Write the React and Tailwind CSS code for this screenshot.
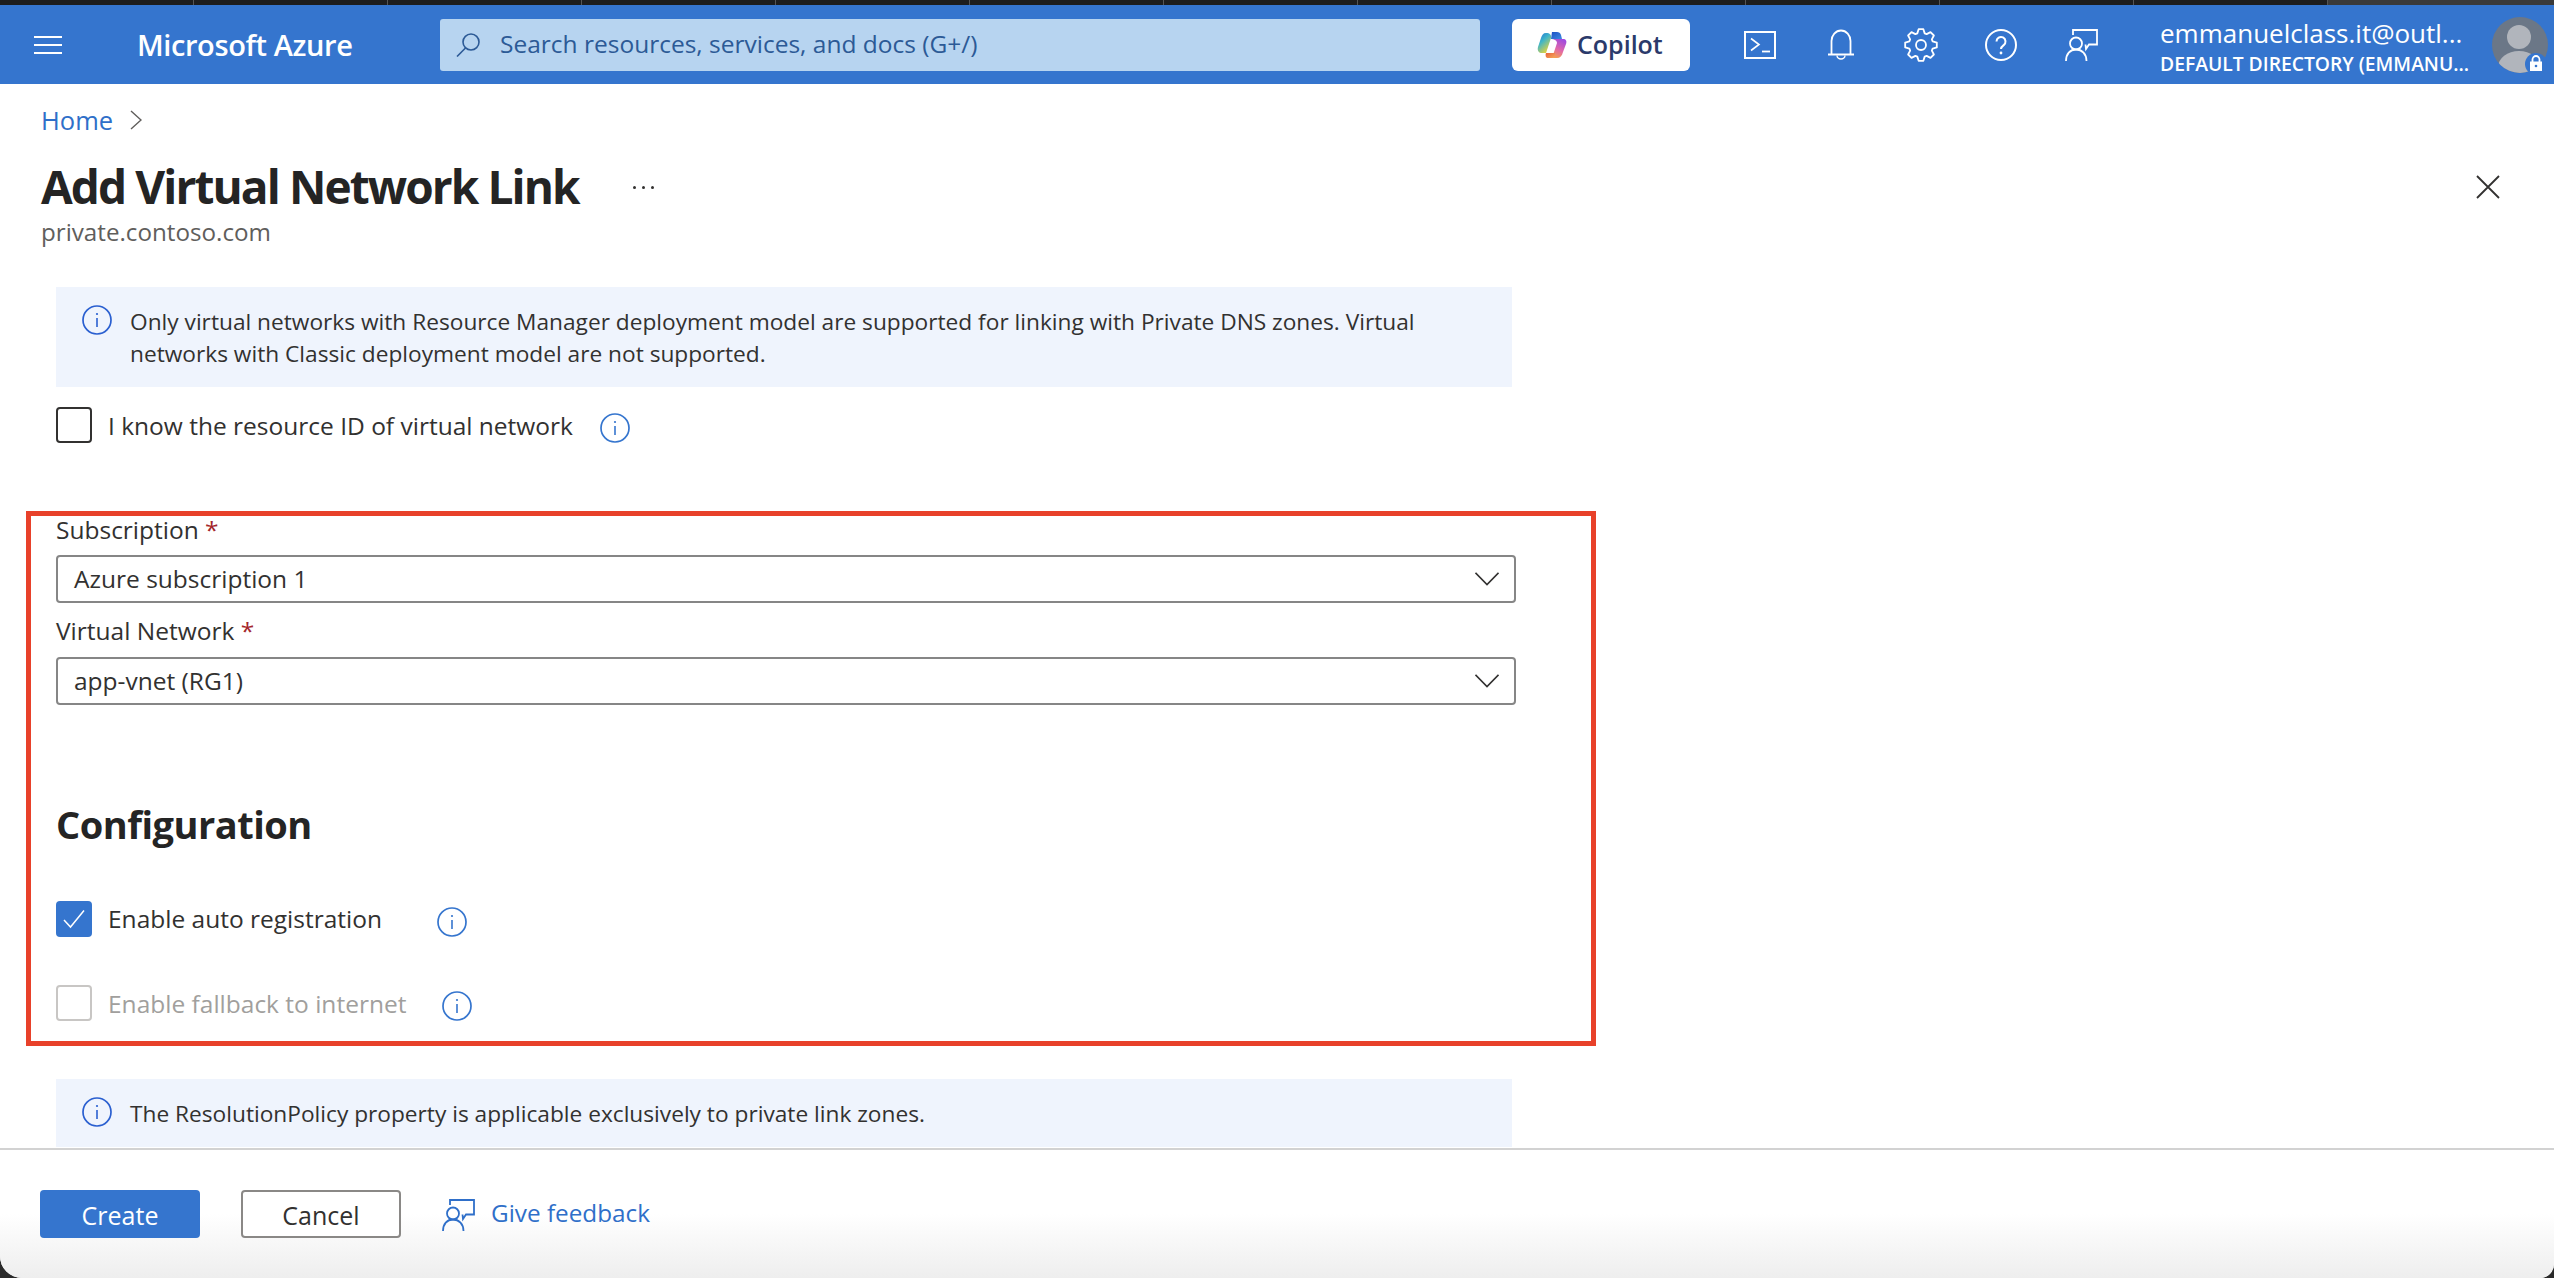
import React from "react";

function gearPoints() {
  // 8 tooth gear outline
  const pts = [];
  const n = 8;
  for (let i = 0; i < n; i++) {
    const a = (i * Math.PI * 2) / n - Math.PI / 2;
    const w = Math.PI / n;
    const add = (r, t) => pts.push(`${(17 + r * Math.cos(a + t)).toFixed(2)},${(17 + r * Math.sin(a + t)).toFixed(2)}`);
    add(12.2, -w * 0.78);
    add(16, -w * 0.38);
    add(16, w * 0.38);
    add(12.2, w * 0.78);
  }
  return pts.join(" ");
}

function TerminalIcon() {
  return (
    <svg width="32" height="28" viewBox="0 0 32 28" fill="none" stroke="#fff">
      <rect x="1" y="1" width="30" height="26" strokeWidth="2" />
      <path d="M7 7.5L15 13.5L7 19.5" strokeWidth="1.6" />
      <path d="M18 20.5H26" strokeWidth="1.8" />
    </svg>
  );
}

function BellIcon() {
  return (
    <svg width="26" height="31" viewBox="0 0 26 31" fill="none" stroke="#fff" strokeWidth="1.8">
      <path d="M3.5 25V12a9.5 10.5 0 0 1 19 0V25" />
      <path d="M0 25.5H26" strokeWidth="2" />
      <path d="M9 26.5a4 3.5 0 0 0 8 0" strokeWidth="1.4" />
    </svg>
  );
}

function GearIcon() {
  return (
    <svg width="34" height="34" viewBox="0 0 34 34" fill="none" stroke="#fff" strokeWidth="1.8" strokeLinejoin="round">
      <polygon points={gearPoints()} />
      <circle cx="17" cy="17" r="5" />
    </svg>
  );
}

function HelpIcon() {
  return (
    <svg width="32" height="32" viewBox="0 0 32 32" fill="none" stroke="#fff">
      <circle cx="16" cy="16" r="15" strokeWidth="2" />
      <path d="M11.5 12.5a4.5 4.5 0 1 1 7.2 3.6c-1.6 1.2-2.7 2-2.7 4" strokeWidth="2" />
      <circle cx="16" cy="24" r="1.4" fill="#fff" stroke="none" />
    </svg>
  );
}

function FeedbackIcon({ color }) {
  return (
    <svg width="33" height="32" viewBox="0 0 33 32" fill="none" stroke={color} strokeWidth="1.8">
      <path d="M8 6V1H32V15.5H24L21 20L20.5 15.5" />
      <circle cx="11" cy="14.5" r="6" />
      <path d="M1 32C1 25 5 20.5 11 20.5S21.500 25 21.500 32" />
    </svg>
  );
}

function InfoIcon({ color, className = "" }) {
  return (
    <svg width="30" height="30" viewBox="0 0 30 30" fill="none" stroke={color} className={`shrink-0 ${className}`}>
      <circle cx="15" cy="15" r="14" strokeWidth="1.7" />
      <path d="M15 13V22" strokeWidth="1.6" />
      <circle cx="15" cy="9" r="1.1" fill={color} stroke="none" />
    </svg>
  );
}

function CopilotLogo() {
  return (
    <svg width="30" height="28" viewBox="0 0 30 28" fill="none">
      <defs>
        <linearGradient id="copA" x1="0" y1="0" x2="0.6" y2="1">
          <stop offset="0" stopColor="#1f6fd6" />
          <stop offset="0.45" stopColor="#3fb5c8" />
          <stop offset="1" stopColor="#e4d33c" />
        </linearGradient>
        <linearGradient id="copB" x1="0.7" y1="0" x2="0.3" y2="1">
          <stop offset="0" stopColor="#a04be0" />
          <stop offset="0.55" stopColor="#e268a8" />
          <stop offset="1" stopColor="#f5a04a" />
        </linearGradient>
        <linearGradient id="copC" x1="0" y1="0" x2="1" y2="1">
          <stop offset="0" stopColor="#1c4fc4" />
          <stop offset="1" stopColor="#3d8be0" />
        </linearGradient>
        <linearGradient id="copD" x1="0" y1="0" x2="1" y2="1">
          <stop offset="0" stopColor="#e8603a" />
          <stop offset="1" stopColor="#f4a85a" />
        </linearGradient>
      </defs>
      <path d="M15 1H20C22 1 23.500 2 24 4L25 8H14Z" fill="url(#copC)" />
      <path d="M9 2C6 2 5 4 4 7L1 16C0 20 2 22 5 22H9L14 7C14.500 4 13 2 9 2Z" fill="url(#copA)" />
      <path d="M13 8H26C29 8 30 10 29 13L26 21C25 25 23 27 20 27H15L20 12C20 10 18 8 13 8Z" fill="url(#copB)" />
      <path d="M9 22H18L17 27H11C9 27 8 25 9 22Z" fill="url(#copD)" />
    </svg>
  );
}

function Avatar() {
  return (
    <div className="relative h-[56px] w-[56px] shrink-0">
      <svg width="56" height="56" viewBox="0 0 56 56">
        <defs>
          <clipPath id="avatarClip">
            <circle cx="28" cy="28" r="28" />
          </clipPath>
        </defs>
        <g clipPath="url(#avatarClip)">
          <rect width="56" height="56" fill="#6b7787" />
          <circle cx="27" cy="20" r="12" fill="#b1b5bc" />
          <ellipse cx="27" cy="50" rx="21" ry="16" fill="#b1b5bc" />
        </g>
      </svg>
      <div className="absolute left-[33px] top-[36px] flex h-[22px] w-[22px] items-center justify-center rounded-full bg-[#3575ce]">
        <svg width="14" height="17" viewBox="0 0 14 17">
          <path d="M3.500 7V4.500a3.500 3.500 0 0 1 7 0V7" fill="none" stroke="#fff" strokeWidth="1.800" />
          <path d="M1 6.500H13V16H1Z" fill="#fff" />
          <circle cx="7" cy="11" r="1.300" fill="#3575ce" />
        </svg>
      </div>
    </div>
  );
}

function Chevron() {
  return (
    <svg width="24" height="14" viewBox="0 0 24 14" fill="none" stroke="#323130" strokeWidth="1.600">
      <path d="M0.500 0.800L12 12.500L23.500 0.800" />
    </svg>
  );
}

function Select({ value }) {
  return (
    <div className="flex h-[48px] w-[1460px] items-center justify-between rounded-[4px] border-2 border-[#868686] pl-[16px] pr-[15px] text-[#323130]">
      <span>{value}</span>
      <Chevron />
    </div>
  );
}

function Banner({ className, children }) {
  return (
    <div className={`flex w-[1456px] items-start gap-[18px] bg-[#eff4fd] pl-[26px] text-[22.7px] text-[#323130] ${className}`}>
      <InfoIcon color="#2a5fd0" />
      <div className="mt-[1px] leading-[32px]">{children}</div>
    </div>
  );
}

function RequiredLabel({ children, className }) {
  return (
    <div className={`h-[28px] leading-[28px] text-[#323130] ${className}`}>
      {children} <span className="text-[#a4262c]">*</span>
    </div>
  );
}

export default function App() {
  return (
    <div className="h-[1278px] w-[2554px] overflow-hidden bg-[#2a2a2a] font-['Open_Sans',sans-serif] text-[24.5px]">
      <div className="flex h-full flex-col overflow-hidden rounded-bl-[22px] rounded-br-[14px] bg-white">
        {/* mac window strip */}
        <div className="grid h-[5px] shrink-0 grid-cols-[repeat(12,194px)_1fr] bg-[#1d1d1d]">
          {Array.from({ length: 12 }).map((_, i) => (
            <div key={i} className="border-r border-[#555]" />
          ))}
          <div className="bg-[#3a3a3a]" />
        </div>

        {/* Top bar */}
        <header className="flex h-[79px] shrink-0 items-center bg-[#3575ce] pl-[34px] text-white">
          <div className="flex h-[18px] w-[28px] flex-col justify-between">
            <div className="h-[2px] bg-white" />
            <div className="h-[2px] bg-white" />
            <div className="h-[2px] bg-white" />
          </div>
          <div className="ml-[75px] w-[303px] text-[29px] font-semibold tracking-[-0.4px]">Microsoft Azure</div>
          <div className="flex h-[52px] w-[1040px] items-center gap-[20px] rounded-[3px] bg-[#b7d4f0] pl-[16px] text-[24.5px] text-[#2c5a96]">
            <svg width="24" height="24" viewBox="0 0 24 24" fill="none" stroke="#2c5a96" strokeWidth="1.600">
              <circle cx="15" cy="9" r="8" />
              <path d="M9.500 15L1 23.500" />
            </svg>
            <span>Search resources, services, and docs (G+/)</span>
          </div>
          <div className="ml-[32px] flex h-[52px] w-[178px] items-center gap-[10px] rounded-[6px] bg-white pl-[25px] text-[25px] font-semibold text-[#2b3a6b]">
            <CopilotLogo />
            <span>Copilot</span>
          </div>
          <div className="ml-[54px]"><TerminalIcon /></div>
          <div className="ml-[52px]"><BellIcon /></div>
          <div className="ml-[50px]"><GearIcon /></div>
          <div className="ml-[47px]"><HelpIcon /></div>
          <div className="ml-[48px]"><FeedbackIcon color="#fff" /></div>
          <div className="ml-[62px] mt-[7px] w-[332px] whitespace-nowrap">
            <div className="text-[26px] leading-[32px]">emmanuelclass.it@outl...</div>
            <div className="text-[19.300px] font-semibold leading-[30px]">DEFAULT DIRECTORY (EMMANU...</div>
          </div>
          <Avatar />
        </header>

        {/* Blade */}
        <main className="min-h-0 flex-1 overflow-hidden">
          <div className="px-[41px] pt-[20px]">
            <div className="flex h-[32px] items-center gap-[17px] text-[25.500px] text-[#2f6fc9]">
              <span>Home</span>
              <svg width="12" height="20" viewBox="0 0 12 20" fill="none" stroke="#605e5c" strokeWidth="1.400">
                <path d="M1 1L11 10L1 19" />
              </svg>
            </div>
            <div className="mt-[22px] flex h-[56px] items-center text-[#242424]">
              <h1 className="w-[592px] whitespace-nowrap text-[46px] font-bold tracking-[-1.9px]">Add Virtual Network Link</h1>
              <span className="mt-[2px] flex gap-[6px]">
                <i className="h-[3px] w-[3px] rounded-full bg-[#323130]" />
                <i className="h-[3px] w-[3px] rounded-full bg-[#323130]" />
                <i className="h-[3px] w-[3px] rounded-full bg-[#323130]" />
              </span>
              <svg className="ml-auto mr-[13px] mt-[2px]" width="24" height="24" viewBox="0 0 24 24" stroke="#323130" strokeWidth="1.800">
                <path d="M1 1L23 23M23 1L1 23" />
              </svg>
            </div>
            <div className="mt-[3px] h-[30px] text-[24.200px] leading-[30px] text-[#605e5c]">private.contoso.com</div>
          </div>

          <div className="ml-[56px] mt-[40px]">
            <Banner className="h-[100px] pt-[18px]">
              <span className="whitespace-nowrap">Only virtual networks with Resource Manager deployment model are supported for linking with Private DNS zones. Virtual</span>
              <br />
              networks with Classic deployment model are not supported.
            </Banner>
            <div className="mt-[20px] flex h-[36px] items-center text-[#323130]">
              <div className="h-[36px] w-[36px] rounded-[4px] border-2 border-[#323130]" />
              <span className="ml-[16px] w-[492px] whitespace-nowrap pt-[2px]">I know the resource ID of virtual network</span>
              <InfoIcon color="#3575ce" className="self-end" />
            </div>
          </div>

          <section className="ml-[26px] mt-[68px] h-[535px] w-[1570px] border-[5px] border-[#e8412a] pl-[25px]">
            <RequiredLabel>Subscription</RequiredLabel>
            <div className="mt-[11px]"><Select value="Azure subscription 1" /></div>
            <RequiredLabel className="mt-[14px]">Virtual Network</RequiredLabel>
            <div className="mt-[12px]"><Select value="app-vnet (RG1)" /></div>
            <h2 className="mt-[94px] h-[50px] text-[38px] font-bold leading-[50px] tracking-[-0.5px] text-[#242424]">Configuration</h2>
            <div className="mt-[52px] flex h-[36px] items-center text-[#323130]">
              <div className="flex h-[36px] w-[36px] items-center justify-center rounded-[4px] bg-[#3575ce]">
                <svg width="22" height="20" viewBox="0 0 22 20" fill="none" stroke="#fff" strokeWidth="1.500">
                  <path d="M1 11L7.500 18L21 1.500" />
                </svg>
              </div>
              <span className="ml-[16px] w-[329px] whitespace-nowrap pt-[1px]">Enable auto registration</span>
              <InfoIcon color="#3575ce" className="self-end" />
            </div>
            <div className="mt-[48px] flex h-[36px] items-center text-[#a19f9d]">
              <div className="h-[36px] w-[36px] rounded-[4px] border-2 border-[#c8c6c4]" />
              <span className="ml-[16px] w-[334px] whitespace-nowrap pt-[2px]">Enable fallback to internet</span>
              <InfoIcon color="#3575ce" className="self-end" />
            </div>
          </section>

          <div className="ml-[56px] mt-[33px]">
            <Banner className="h-[68px] pt-[18px]">The ResolutionPolicy property is applicable exclusively to private link zones.</Banner>
          </div>
        </main>

        {/* Footer */}
        <footer className="flex h-[130px] shrink-0 items-start border-t-2 border-[#d2d2d2] bg-linear-to-b from-white from-50% to-[#eeeeee] pl-[40px] pt-[40px]">
          <button className="h-[48px] w-[160px] rounded-[4px] bg-[#3575ce] pt-[3px] text-[25px] font-medium text-white">Create</button>
          <button className="ml-[41px] h-[48px] w-[160px] rounded-[4px] border-2 border-[#8a8886] bg-white pt-[3px] text-[25px] font-medium text-[#323130]">Cancel</button>
          <div className="ml-[41px] mt-[9px]"><FeedbackIcon color="#2f6fc9" /></div>
          <span className="ml-[16px] mt-[5px] text-[24.300px] text-[#2f6fc9]">Give feedback</span>
        </footer>
      </div>
    </div>
  );
}
